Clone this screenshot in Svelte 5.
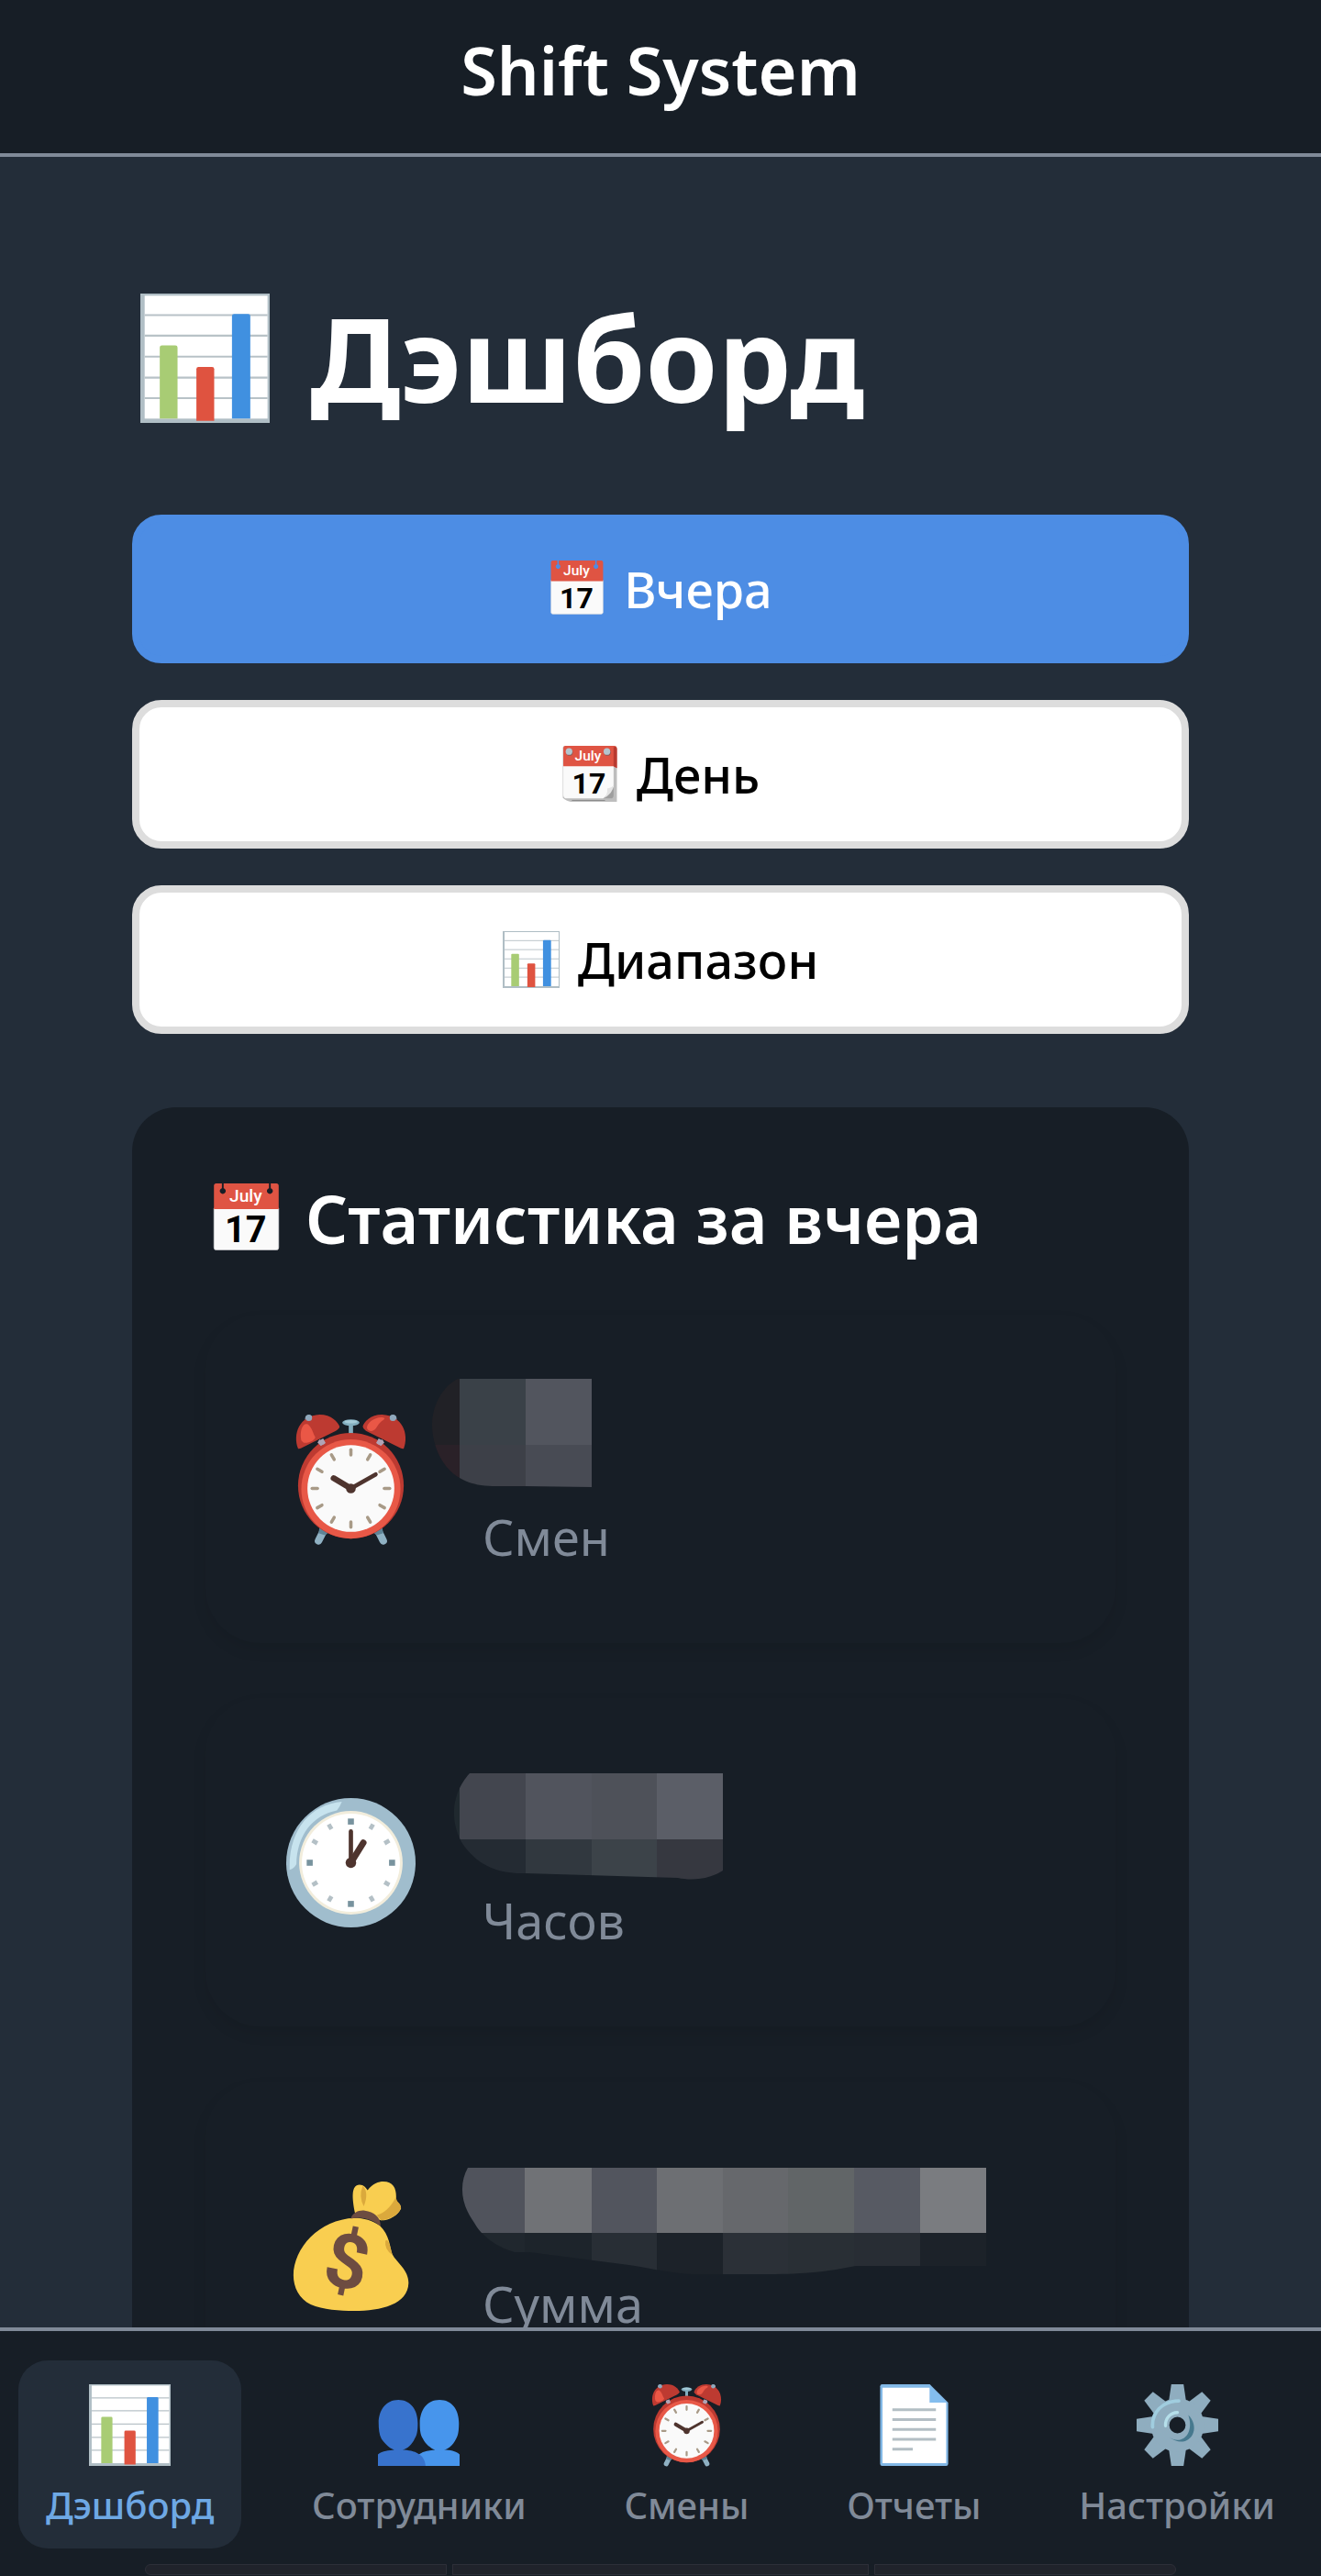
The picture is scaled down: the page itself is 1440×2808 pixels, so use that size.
<script>
  // Period filter
  let period = $state('yesterday');
  const periods = [
    { id: 'yesterday', icon: 'calendar', label: 'Вчера' },
    { id: 'day', icon: 'tearoff', label: 'День' },
    { id: 'range', icon: 'chart', label: 'Диапазон' },
  ];

  // Bottom navigation
  let page = $state('dashboard');
  const pages = [
    { id: 'dashboard', icon: 'chart', label: 'Дэшборд' },
    { id: 'staff', icon: 'people', label: 'Сотрудники' },
    { id: 'shifts', icon: 'alarm', label: 'Смены' },
    { id: 'reports', icon: 'document', label: 'Отчеты' },
    { id: 'settings', icon: 'gear', label: 'Настройки' },
  ];

  // Values are hidden behind mosaic tiles: outline + [x, y, width, height, fill]
  const stats = [
    {
      icon: 'alarm',
      label: 'Смен',
      outline: 'M46 8 H192 V126 L118 125 H84 C68 125 56 121 48 116 C30 106 18 82 18 58 C18 36 30 16 46 8Z',
      tiles: [
        [0, 8, 48, 72, '#212126'],
        [48, 8, 72, 72, '#3a4148'],
        [120, 8, 72, 72, '#52555e'],
        [0, 80, 48, 60, '#2a2128'],
        [48, 80, 72, 60, '#3d4048'],
        [120, 80, 72, 60, '#484b54'],
      ],
    },
    {
      icon: 'clock',
      label: 'Часов',
      outline: 'M59 20 H335 V126 C320 136 300 137 286 134 L120 129 C85 130 66 117 52 98 C38 76 37 44 59 20Z',
      tiles: [
        [0, 20, 48, 72, '#20292f'],
        [48, 20, 72, 72, '#43464f'],
        [120, 20, 72, 72, '#51545d'],
        [192, 20, 71, 72, '#4e5159'],
        [263, 20, 72, 72, '#5b5e67'],
        [0, 92, 120, 48, '#242b33'],
        [120, 92, 72, 48, '#31383f'],
        [192, 92, 71, 48, '#3c4349'],
        [263, 92, 72, 48, '#363840'],
      ],
    },
    {
      icon: 'money',
      label: 'Сумма',
      outline: 'M57 32 H622 V139 H480 C450 145 425 148 385 148 H300 C276 147 250 140 225 137 L124 124 H108 C84 117 70 103 64 92 C48 70 48 48 57 32Z',
      tiles: [
        [40, 32, 79, 71, '#50535c'],
        [119, 32, 73, 71, '#707276'],
        [192, 32, 71, 71, '#52555e'],
        [263, 32, 72, 71, '#6d6f73'],
        [335, 32, 71, 71, '#66686c'],
        [406, 32, 72, 71, '#616567'],
        [478, 32, 72, 71, '#575a63'],
        [550, 32, 72, 71, '#7a7c80'],
        [40, 103, 79, 48, '#20272e'],
        [119, 103, 73, 48, '#1d242b'],
        [192, 103, 71, 48, '#282e35'],
        [263, 103, 72, 48, '#1c2229'],
        [335, 103, 71, 48, '#2b3037'],
        [406, 103, 72, 48, '#292f35'],
        [478, 103, 72, 48, '#282d34'],
        [550, 103, 72, 48, '#1c2229'],
      ],
    },
  ];

  const hours = [0, 30, 60, 90, 120, 150, 180, 210, 240, 270, 300, 330];
  const teeth = [0, 45, 90, 135, 180, 225, 270, 315];
</script>

{#snippet icon(name)}
  <svg class="icon" viewBox="0 0 120 120" aria-hidden="true">
    {#if name === 'chart'}
      <rect width="120" height="120" fill="#b0bec5" />
      <rect x="4" y="2" width="114" height="114" fill="#fff" />
      <path d="M4 20H118M4 39H118M4 58.5H118M4 78H118M4 97H118" stroke="#b8c2c7" stroke-width="1.8" />
      <path d="M18 116V50q0-2 2-2h12.500q2 0 2 2v66z" fill="#a8cc74" />
      <path d="M52 116V70q0-2 2-2h12.500q2 0 2 2v48h-16.500z" fill="#df5340" />
      <path d="M85 116V21q0-2 2-2h13q2 0 2 2v95z" fill="#4090e0" />
    {:else if name === 'calendar'}
      <path d="M5 42H115V109q0 4-4 4H9q-4 0-4-4z" fill="#fafafa" stroke="#d3d5d8" stroke-width="1" />
      <path
        fill-rule="evenodd"
        d="M9 0H18.500V8a5 5 0 1 0 3 0V0H98.500V8a5 5 0 1 0 3 0V0H111q4 0 4 4V43.500H5V4q0-4 4-4z"
        fill="#df5443"
      />
      <text class="month" x="59" y="31">July</text>
      <text class="date" x="59" y="100">17</text>
    {:else if name === 'tearoff'}
      <path d="M3 5q0-5 5-5H111q6 0 6 6V118H20q-8 0-17-8z" fill="#bdbdbd" />
      <path d="M4 40H110V90L88 111H12q-8 0-8-7z" fill="#fafafa" />
      <path d="M22 115H92" stroke="#8c8c8c" stroke-width="2" />
      <path d="M88 111q12-4 10-20q6 2 12-4v18q0 6-6 6z" fill="#9e9e9e" />
      <path d="M88 111q10-7 9-22q6 2 13-6q-1 18-22 28z" fill="#e4e4e4" />
      <path d="M8 0H111q6 0 6 6V47L110 43H4V5q0-5 4-5z" fill="#df5443" />
      <path d="M110 3l4-1q3 1 3 5V47L110 43z" fill="#b83a30" />
      <circle cx="17" cy="14" r="7" fill="#8c5a58" />
      <circle cx="16" cy="12" r="7" fill="#b4c5ce" />
      <circle cx="97" cy="14" r="7" fill="#8c5a58" />
      <circle cx="96" cy="12" r="7" fill="#b4c5ce" />
      <text class="month" x="56" y="31">July</text>
      <text class="date" x="58" y="100">17</text>
    {:else if name === 'alarm'}
      <path d="M34 109L30 117M86 109L90 117" stroke="#8fb1c3" stroke-width="7" stroke-linecap="round" />
      <path d="M31 104L40 109L36 112L30 110ZM89 104L80 109L84 112L90 110Z" fill="#5f8496" />
      <path d="M60 8V20" stroke="#82aebf" stroke-width="4" />
      <circle cx="60" cy="66" r="49" fill="#bd3a31" />
      <circle cx="60" cy="69" r="46" fill="#e85847" />
      <circle cx="60" cy="68.500" r="40.300" fill="#fafafa" />
      <path d="M31 23L36 27L32 29L29 26ZM89 23L84 27L88 29L91 26Z" fill="#b0a3b5" />
      <circle cx="21" cy="4" r="3.500" fill="#90a9bd" />
      <circle cx="99" cy="4" r="3.500" fill="#90a9bd" />
      <path d="M11 31.500C6 18 12 1 31 0C42 0 48 7 49.500 11Q49.500 13 46 15L14 31Q12 32 11 31.500Z" fill="#bd3a31" />
      <path d="M109 31.500C114 18 108 1 89 0C78 0 72 7 71 11Q71 13 74 15L106 31Q108 32 109 31.500Z" fill="#bd3a31" />
      <path d="M14 24C12 14 16 7 20 9C24 12 25 18 27 21C26 25 18 27 16 26Z" fill="#ea5746" />
      <path d="M75 13C74 8 82 2 89 2.500Q93 3 90 5C86 7 85 11 82 14Q77 17 75 13Z" fill="#ea5746" />
      <circle cx="21" cy="3" r="3" fill="#90a9bd" />
      <circle cx="99" cy="3" r="3" fill="#90a9bd" />
      <rect x="30.500" y="23" width="5" height="5" fill="#b0a3b5" transform="rotate(-28 33 25)" />
      <rect x="84.500" y="23" width="5" height="5" fill="#b0a3b5" transform="rotate(28 87 25)" />
      <ellipse cx="60" cy="7.500" rx="8" ry="3" fill="#82aebf" />
      <ellipse cx="60" cy="6.500" rx="6" ry="1.500" fill="#a5cbd8" />
      {#each hours as angle}
        <path d="M60 32.500V37.500" stroke="#a89a87" stroke-width="3" stroke-linecap="round" transform="rotate({angle} 60 68.5)" />
      {/each}
      <path d="M44 59L60 68.500" stroke="#4e342e" stroke-width="5.500" stroke-linecap="round" />
      <path d="M83 55.500L60 68.500" stroke="#4e342e" stroke-width="3.800" stroke-linecap="round" />
      <circle cx="60" cy="68.500" r="4.500" fill="#4e342e" />
    {:else if name === 'clock'}
      <circle cx="60" cy="60" r="60" fill="#a0bdcd" />
      <path d="M51.600 3.500C22 6 2 30 3.200 66.700Q8 65 9.500 61C10 35 24 16 47 11.500Q50 8 51.600 3.500Z" fill="#c7e3ee" />
      <circle cx="60" cy="60" r="48" fill="#f2eddc" />
      <circle cx="60" cy="60" r="45.500" fill="#fff" />
      {#each hours as angle}
        {#if angle % 90 === 0}
          <rect x="57.200" y="19" width="5.600" height="5.600" fill="#78939e" transform="rotate({angle} 60 60)" />
        {:else}
          <rect x="58" y="18.800" width="4" height="5.200" fill="#b4c0c6" transform="rotate({angle} 60 60)" />
        {/if}
      {/each}
      <path d="M60 31V60" stroke="#4e342e" stroke-width="4" stroke-linecap="round" />
      <path d="M71.500 41.500L60 60" stroke="#4e342e" stroke-width="6" stroke-linecap="round" />
      <circle cx="60" cy="60" r="4.900" fill="#4e342e" />
    {:else if name === 'money'}
      <path
        d="M64 30C61 16 60 3 68 3C72 3 74 6 75.500 8C80 2 86 0 90 0C99 0 102 6 102 14C101 20 107 20 106.500 25C104 31 96 36 88 36L72 32Z"
        fill="#f9ce50"
      />
      <path d="M71 4Q77 10 72 23Q67 14 71 4ZM102 14C97 24 90 30 84 31L88 36C96 35 105 31 106.500 24C106 19 102 20 102 14Z" fill="#dba93c" />
      <path
        d="M63.600 33.800C30 35 7 62 6.700 87C6.700 98 12 109 22.700 114C34 119 50 120 63 120C88 120 113 114 113.500 94C113.500 82 103 76 98.400 67.500C96 60 96 50 87 41C80 36 72 33.800 63.600 33.800Z"
        fill="#f9ce50"
      />
      <path d="M98.500 68Q91 63 92 55Q94 53 96 59Z" fill="#dba93c" />
      <path d="M60 34.500C61 29 68 26 73 27C81 28 88 33 87.500 41.500C80 35 70 32 60 34.500Z" fill="#6d4c41" />
      <text class="dollar" x="56" y="99" transform="rotate(12 58 76)">$</text>
    {:else if name === 'people'}
      <path d="M90.500 23C109 23 119 38 119 57C119 68 118 75 115 80C110 91 102 96 97 96.500C106 96.500 114 98 120 103V120H50L60 103C68 98 76 97 84 96.500C77 94 70 88 66 80C62 74 61.500 66 61.500 57C62 38 72 23 90.500 23Z" fill="#4795ec" />
      <path d="M30 23C48 23 58.500 38 58.500 57C58.500 66 58 74 54 80C50 89 43 95 36 96.500C54 97 69 103 70 120H0V103C7 98 16 97 24 96.500C16 94 9 86 5 80C2 74 1 66 1 57C1 38 12 23 30 23Z" fill="#3873cd" />
    {:else if name === 'document'}
      <path d="M13 0H83L110 27V117q0 3-3 3H13q-3 0-3-3V3q0-3 3-3z" fill="#82b8e6" />
      <path d="M13.500 5H83V27H107V116H13.500z" fill="#fff" />
      <path d="M83 2L108 27H83z" fill="#84bdee" />
      <path d="M28 37.500H92M28 52H92M28 66.500H92M28 81H92M28 95.500H58" stroke="#b3bec4" stroke-width="4" />
    {:else if name === 'gear'}
      {#each teeth as angle}
        <path d="M51 0H69L73 27H47Z" fill="#8fadbf" transform="rotate({angle} 60 60)" />
      {/each}
      <circle cx="60" cy="60" r="25.500" fill="none" stroke="#8fadbf" stroke-width="27" />
      <path d="M23.500 63C22 41 38 25 62 24.500" fill="none" stroke="#a0cddf" stroke-width="5" stroke-linecap="round" />
      <path d="M42.500 61C42 50 50 41.500 60 41.500" fill="none" stroke="#b5dfea" stroke-width="4.500" stroke-linecap="round" />
      <path d="M76 45C97 66 76 98 47.500 78C68 90 85 72 76 45Z" fill="#46798e" />
    {/if}
  </svg>
{/snippet}

<div class="app">
  <header class="topbar">Shift System</header>

  <main class="content">
    <h1 class="heading">{@render icon('chart')}Дэшборд</h1>

    <div class="periods">
      {#each periods as item}
        <button class="period" class:selected={period === item.id} onclick={() => (period = item.id)}>
          {@render icon(item.icon)}
          {item.label}
        </button>
      {/each}
    </div>

    <section class="panel">
      <h2 class="panel-title">{@render icon('calendar')}Статистика за вчера</h2>

      <div class="stats">
        {#each stats as stat, i}
          <div class="stat">
            {@render icon(stat.icon)}
            <div class="stat-body">
              <svg class="mosaic" viewBox="0 0 640 148" aria-hidden="true">
                <clipPath id="mosaic-{i}"><path d={stat.outline} /></clipPath>
                <g clip-path="url(#mosaic-{i})" shape-rendering="crispEdges">
                  {#each stat.tiles as [x, y, width, height, fill]}
                    <rect {x} {y} {width} {height} {fill} />
                  {/each}
                </g>
              </svg>
              <span class="stat-label">{stat.label}</span>
            </div>
          </div>
        {/each}
      </div>
    </section>
  </main>

  <footer class="bottombar">
    <nav class="tabs">
      {#each pages as item}
        <button class="tab" class:active={page === item.id} onclick={() => (page = item.id)}>
          {@render icon(item.icon)}
          <span>{item.label}</span>
        </button>
      {/each}
    </nav>
    <div class="system-bar">
      <i class="key"></i>
      <i class="key wide"></i>
      <i class="key"></i>
    </div>
  </footer>
</div>

<style>
  :global(body) {
    margin: 0;
    background: #232d39;
  }

  .app {
    display: flex;
    flex-direction: column;
    height: 100vh;
    background: #232d39;
    color: #fff;
    font-family: 'Noto Sans', 'Open Sans', sans-serif;
  }

  .icon {
    display: block;
    flex: none;
    overflow: visible;
  }

  .month,
  .date,
  .dollar {
    font-family: Roboto, sans-serif;
    font-weight: 700;
    text-anchor: middle;
  }

  .month {
    font-size: 30px;
    font-weight: 500;
    fill: #fff;
  }

  .date {
    font-size: 62px;
    fill: #000;
  }

  .dollar {
    font-size: 70px;
    fill: #6d4c41;
  }

  .topbar {
    flex: none;
    padding: 26px 0 41px;
    border-bottom: 4px solid #808a98;
    background: #171e26;
    font-size: 72px;
    font-weight: 600;
    line-height: 100px;
    text-align: center;
  }

  .content {
    flex: 1;
    min-height: 0;
    padding: 144px 10% 0;
    overflow-y: auto;
    scrollbar-width: none;
  }

  .heading {
    display: flex;
    align-items: center;
    gap: 44px;
    margin: 0 0 96px;
    padding-left: 9px;
    font-size: 127px;
    font-weight: 700;
    line-height: 150px;
  }

  .heading .icon {
    width: 141px;
    height: 141px;
  }

  .periods {
    display: flex;
    flex-direction: column;
    gap: 40px;
  }

  .period {
    display: flex;
    align-items: center;
    justify-content: center;
    gap: 20px;
    height: 162px;
    padding: 0;
    border: 8px solid #ddd;
    border-radius: 32px;
    background: #fff;
    color: #000;
    font: inherit;
    font-size: 54px;
    font-weight: 500;
    cursor: pointer;
  }

  .period.selected {
    border-color: #4d8de4;
    background: #4d8de4;
    color: #fff;
  }

  .period .icon {
    width: 62px;
    height: 62px;
  }

  .panel {
    margin-top: 80px;
    padding: 80px;
    border-radius: 48px;
    background: #171e26;
  }

  .panel-title {
    display: flex;
    align-items: center;
    gap: 26px;
    margin: 0 0 64px;
    padding-left: 6px;
    font-size: 72px;
    font-weight: 600;
    line-height: 82px;
  }

  .panel-title .icon {
    width: 77px;
    height: 77px;
  }

  .stats {
    display: flex;
    flex-direction: column;
    gap: 60px;
  }

  .stat {
    display: flex;
    align-items: center;
    box-sizing: border-box;
    height: 358px;
    padding: 0 88px;
    border-radius: 60px;
    box-shadow: 0 8px 16px rgba(0, 0, 0, 0.08);
  }

  .stat .icon {
    width: 141px;
    height: 141px;
  }

  .stat-body {
    flex: 1;
    min-width: 0;
    padding-bottom: 22px;
  }

  .mosaic {
    display: block;
    width: 640px;
    height: 148px;
  }

  .stat-label {
    display: block;
    padding-left: 73px;
    color: #808a98;
    font-size: 54px;
    line-height: 64px;
  }

  .bottombar {
    flex: none;
    border-top: 4px solid #808a98;
    background: #171e26;
  }

  .tabs {
    display: flex;
    justify-content: space-between;
    padding: 32px 20px 17px;
  }

  .tab {
    display: flex;
    flex-direction: column;
    align-items: center;
    gap: 14px;
    padding: 26px 30px 18px;
    border: 0;
    border-radius: 32px;
    background: none;
    color: #808a98;
    font: inherit;
    font-size: 40px;
    font-weight: 500;
    line-height: 58px;
    cursor: pointer;
  }

  .tab.active {
    background: #232d39;
    color: #6ea8e4;
  }

  .tab .icon {
    width: 89px;
    height: 89px;
  }

  .system-bar {
    display: flex;
    justify-content: center;
    gap: 6px;
    padding: 0 11% 1px;
  }

  .key {
    flex: 328;
    box-sizing: border-box;
    height: 12px;
    border: 1px solid #2d2f38;
    background: #20232b;
  }

  .key.wide {
    flex: 454;
  }

  .key:first-child {
    border-radius: 6px 0 0 6px;
  }

  .key:last-child {
    border-radius: 0 6px 6px 0;
  }
</style>
